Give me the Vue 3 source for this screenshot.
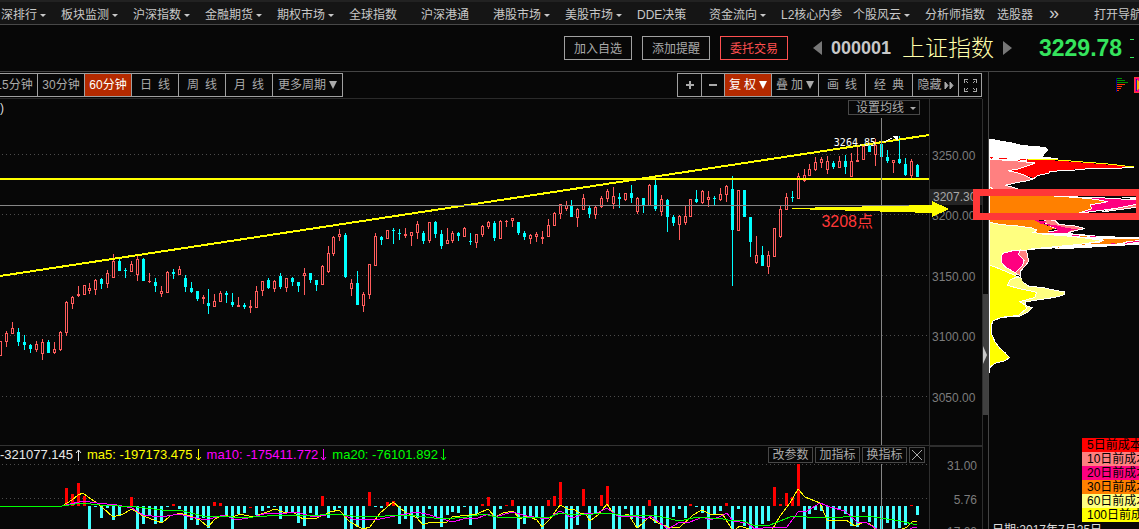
<script setup>
const menu = [
  { label: '深排行', caret: true, size: 'first' },
  { label: '板块监测', caret: true },
  { label: '沪深指数', caret: true },
  { label: '金融期货', caret: true },
  { label: '期权市场', caret: true },
  { label: '全球指数' },
  { label: '沪深港通' },
  { label: '港股市场', caret: true },
  { label: '美股市场', caret: true },
  { label: 'DDE决策' },
  { label: '资金流向', caret: true },
  { label: 'L2核心内参' },
  { label: '个股风云', caret: true },
  { label: '分析师指数' },
  { label: '选股器', size: 'short' },
  { label: '»', size: 'more' },
  { label: '打开导航' }
]
const periods = ['15分钟', '30分钟', '60分钟', '日线', '周线', '月线']
const priceLabels = [
  { text: '3250.00', y: 156 },
  { text: '3200.00', y: 216 },
  { text: '3150.00', y: 277 },
  { text: '3100.00', y: 337 },
  { text: '3050.00', y: 398 }
]
const priceTop = y => ({ top: ((y - 99) / 346) * 100 + '%' })
const volumeLabels = [
  { text: '31.00', y: 19 },
  { text: '5.76', y: 53 },
  { text: '-17.00', y: 85 }
]
const volumeTop = y => ({ top: y + 'px' })
const averages = [
  { text: '-321077.145', dir: 'up', tone: 'white' },
  { text: 'ma5: -197173.475', dir: 'down', tone: 'yellow' },
  { text: 'ma10: -175411.772', dir: 'down', tone: 'magenta' },
  { text: 'ma20: -76101.892', dir: 'down', tone: 'green' }
]
const costs = [5, 10, 20, 30, 60, 100]

// Samples are in thirds of a chart unit, relative to each batch origin:
// kind + centre, high, body top, body bottom, low.
const candleBatches = [
  { x: 0, y: 230, rows: 'r0,333,333,378,378 r19,303,309,336,351 r37,276,294,312,312 c55,294,306,336,348 c73,315,336,345,360 c91,342,345,357,369 r109,333,342,360,366 r127,327,336,372,390 c145,330,336,369,369 r163,336,357,369,372 r181,303,306,360,363 r199,213,216,309,318 r217,198,201,222,237 r235,168,192,198,201 r253,165,165,195,195 r268,159,174,183,192 r286,147,150,180,195 c304,144,147,162,177 r322,120,129,162,174 r340,72,93,144,144 c358,84,93,123,123 c376,114,120,123,144 r394,93,102,126,126 r412,78,87,135,153 c430,84,87,153,153 r448,129,153,156,159 c466,144,156,168,186 r484,168,183,192,201 r502,123,126,189,189 c520,117,126,132,147 r538,108,117,135,135 c556,135,144,171,186 c574,156,174,186,189 c592,183,183,207,213 r610,195,201,207,222 c625,177,219,228,252 r643,192,213,231,231 r661,183,189,216,216 c679,183,189,195,219 c697,189,216,225,231 r715,201,225,231,231 c733,219,225,231,237 r751,210,228,234,249 r769,168,183,234,234 r787,153,153,183,198 c805,144,150,174,177 r823,150,153,177,186 c841,129,138,171,177 r859,144,144,174,186 c877,141,144,156,168 c895,156,156,168,186' },
  { x: 300, y: 160, rows: 'r13,324,339,348,405 c31,339,339,360,369 c49,360,360,375,393 r67,315,318,375,375 r85,258,279,336,339 r100,228,231,282,288 r118,207,222,231,243 c136,219,225,351,354 r154,357,369,387,408 c172,333,369,435,435 r190,396,402,438,456 r208,312,312,405,417 r226,219,228,318,318 c244,228,231,240,255 r262,210,210,237,237 c280,204,210,213,252 c298,207,219,222,240 r316,204,222,228,234 r334,216,216,228,258 r352,183,192,219,237 c370,213,219,243,252 r388,186,186,243,249 c406,183,186,222,234 c424,210,222,258,267 r442,204,240,252,252 r457,213,219,243,249 c475,216,219,228,243 r493,201,204,231,231 c511,219,243,246,255 r529,222,222,249,264 r547,195,198,225,231 r565,183,186,201,207 c583,183,189,234,243 r601,180,183,237,237 r619,180,183,186,201 r637,174,174,183,201 c655,186,186,219,225 c673,213,219,231,240 r691,222,225,237,252 r709,216,222,231,246 r727,213,231,237,252 r745,177,195,231,231 r763,156,159,198,198 r781,132,132,162,177 r799,123,135,147,153 c814,120,138,171,171 r832,144,147,174,201 r850,102,114,150,150 c868,138,144,162,174 r886,138,141,165,177' },
  { x: 600, y: 120, rows: 'r4,228,234,261,264 r22,207,213,237,246 r40,201,228,252,267 c58,219,231,237,264 r76,219,219,240,243 c94,195,219,234,249 r112,231,234,276,282 c130,234,234,255,279 r148,192,195,258,258 c166,177,195,267,273 r184,225,237,276,288 c202,237,240,291,336 c220,285,291,309,318 r238,285,288,315,360 r256,258,288,309,315 r271,237,237,291,291 c289,210,237,246,249 r307,210,213,249,252 r325,213,231,240,261 c343,228,234,237,255 r361,204,222,240,243 r379,195,198,225,246 c397,168,207,330,498 r415,210,210,333,333 c433,210,210,291,291 c451,291,291,366,411 r469,348,405,429,432 c487,378,405,438,438 r505,393,405,441,462 r523,324,324,411,411 r541,258,267,351,354 r559,219,231,270,270 c577,213,231,234,246 r595,159,168,237,237' },
  { x: 760, y: 120, rows: 'r133,147,165,183,186 r148,132,147,168,168 r166,111,126,150,153 r184,111,117,129,144 r202,108,123,150,162 c220,123,129,141,147 r238,108,123,144,144 c256,105,123,141,162 r274,99,123,171,171 r292,75,120,126,126 r310,75,78,120,120 c328,72,78,96,96 r346,57,75,105,138 c364,66,72,111,126 c382,90,111,123,129 r400,120,120,129,159 c418,48,117,129,132 c436,114,132,165,168 r454,117,123,168,174 c472,132,135,171,171' }
]
const box = (x, y, w, h) => `M${x} ${y}h${w}v${h}h${-w}z`
let rising = ''
let hollow = ''
let falling = ''
for (const batch of candleBatches) {
  for (const row of batch.rows.split(' ')) {
    const [cx, ...ys] = row.slice(1).split(',').map(Number)
    const x = batch.x + Math.floor(cx / 3)
    const [high, top, bottom, low] = ys.map(v => batch.y + Math.round(v / 3))
    if (row[0] === 'r') {
      if (top > high) rising += box(x, high, 1, top - high)
      if (low > bottom) rising += box(x, bottom, 1, low - bottom)
      rising += box(x - 1, top, 3, bottom - top)
      if (bottom - top > 2) hollow += box(x, top + 1, 1, bottom - top - 2)
    } else {
      falling += box(x, high, 1, low - high) + box(x - 1, top, 3, bottom - top)
    }
  }
}

// Histogram samples: kind + centre, end; the zero line is at 198.
const barBatches = [
  { x: 0, rows: 'r199,144 r217,162 r235,129 r253,168 c268,267 c286,201 c304,234 c322,204 c340,240 c358,228 r394,171 c412,267 c430,252 c448,225 c466,252 c484,250 c502,201 r520,192 c538,207 c556,267 c574,240 c592,255 c610,234 c625,264 r643,186 r661,189 c679,228 c697,267 c715,222 c733,219 r751,201 c769,225 c787,213 c805,204 c823,201 c841,237 c859,216 c877,219 c895,249 c913,258 c931,219 c949,231 r967,168 c985,234 c1003,210 c1018,204 c1036,267 c1054,267 c1072,261 c1090,267 r1108,156 c1126,201' },
  { x: 380, rows: 'c4,204 r22,186 r40,183 c58,252 c76,237 c94,267 c112,234 c130,267 c148,207 c166,231 c184,261 c202,225 c217,216 c235,219 c253,201 c271,255 c289,222 r307,192 r325,171 c343,267 c361,207 r379,195 r397,180 c415,267 c433,252 c451,228 c469,231 c487,267 r505,180 r523,168 r541,126 c559,267 c574,267 c592,255 r610,147 c628,267 c646,222 r664,165 r682,138 c700,267 c718,267 c736,207 c754,237 c772,264 c790,267 r808,180 c826,249 c844,267 c862,267 c880,231 c898,207 c916,234 r931,192 c949,201 c967,219 c985,267 c1003,222 c1021,213 r1039,189 c1057,267 c1075,207' },
  { x: 740, rows: 'c13,258 c31,267 c49,267 c67,252 c85,243 r103,141 r121,192 r139,159 r157,171 r175,72 c193,267 c208,222 c226,210 c244,213 c262,267 c280,267 c298,210 c316,222 c334,258 c352,261 c370,216 c388,246 c406,267 c424,267 c442,249 c460,267 c478,264 c496,255 r514,195 c532,225' }
]
let redBars = ''
let cyanBars = ''
for (const batch of barBatches) {
  for (const row of batch.rows.split(' ')) {
    const [cx, end] = row.slice(1).split(',').map(Number)
    const x = batch.x + Math.floor(cx / 3) - 1
    const y = 440 + Math.round(end / 3)
    if (row[0] === 'r') redBars += box(x, y, 3, Math.abs(506 - y) || 1)
    else cyanBars += box(x, 506, 3, y - 506)
  }
}
const curve = parts => parts.map(([x, s]) => s.split(' ').map(p => {
  const [a, b] = p.split(',').map(Number)
  return `${Math.round(x + a / 3)},${Math.round(440 + b / 3)}`
}).join(' ')).join(' ')
const ma5 = curve([
  [0, '185,198 215,180 235,166 250,160 265,170 290,188 310,204 340,230 370,222 395,208 430,228 470,242 485,249 510,228 540,219 570,228 600,240 625,260 645,236 670,226 700,230 720,222 760,232 800,216 825,208 850,216 880,217 910,238 950,234 990,216 1018,211 1050,245 1090,266 1110,260'],
  [380, '0,220 40,186 60,205 75,215 110,235 130,255 150,246 200,247 215,230 290,222 325,208 345,230 370,218 400,214 420,236 440,228 470,240 487,262 510,236 541,196 565,208 580,206 600,218 615,220 630,244 655,225 682,192 700,220 720,230 745,222 772,264 790,250 808,232 835,250 865,262 900,262 940,224 965,210 990,222 1030,225 1058,272 1080,258'],
  [740, '50,275 95,270 120,228 150,188 175,148 195,172 240,190 262,241 318,241 345,259 372,246 390,252 410,270 480,270 500,262 515,247 532,243']
])
const ma10 = curve([
  [0, '185,197 250,182 290,188 350,196 395,205 430,224 480,230 540,221 570,232 620,240 670,226 710,241 760,230 800,218 860,218 890,217 940,230 1000,222 1030,224 1060,238 1100,241'],
  [380, '0,236 60,224 110,217 150,226 215,245 260,234 295,235 325,221 345,231 395,217 440,228 500,238 541,214 575,233 620,220 650,220 680,204 718,232 760,228 800,236 812,228 865,266 900,247 930,246 970,232 990,240 1018,232 1040,218 1060,244'],
  [740, '20,250 45,268 95,262 140,261 175,217 200,214 240,190 270,200 315,214 350,245 375,245 410,268 500,275 520,262 532,262']
])
const ma20 = curve([
  [0, '0,199 185,199 245,190 300,195 410,201 485,211 550,213 610,228 700,230 760,232 800,228 830,225 860,225 890,228 960,224 1000,222 1060,228'],
  [380, '0,230 30,226 110,229 190,236 260,231 310,223 350,230 420,230 510,230 540,220 580,225 640,222 690,220 720,226 830,228 900,243 950,232 1030,236 1060,243'],
  [740, '0,241 40,256 90,254 150,232 170,228 200,232 290,234 330,229 380,227 440,236 480,243 532,254']
])
</script>

<template>
  <div class="app">
    <nav class="menu">
      <a v-for="m in menu" :key="m.label" href="#" class="menu-item" :class="m.size">
        <span>{{ m.label }}</span><i v-if="m.caret" class="caret"></i>
      </a>
    </nav>

    <header class="quote">
      <div class="actions">
        <button class="action">加入自选</button>
        <button class="action">添加提醒</button>
        <button class="action hot">委托交易</button>
      </div>
      <button class="step" aria-label="上一个"><svg width="9" height="14"><path d="M9 0v14L0 7z" fill="#777" /></svg></button>
      <span class="code">000001</span>
      <h1 class="name">上证指数</h1>
      <button class="step" aria-label="下一个"><svg width="9" height="14"><path d="M0 0v14l9-7z" fill="#777" /></svg></button>
      <strong class="price">3229.78</strong>
      <span class="dashes"><i></i><i></i></span>
    </header>

    <div class="body">
      <main class="main">
        <div class="toolbar">
          <div class="group periods">
            <button v-for="p in periods" :key="p" class="tool" :class="{ on: p === '60分钟' }">
              <template v-if="p.length === 2"><span class="wide"><span>{{ p[0] }}</span><span>{{ p[1] }}</span></span></template>
              <template v-else>{{ p }}</template>
            </button>
            <button class="tool more-periods">更多周期<i class="tri"></i></button>
          </div>
          <div class="group">
            <button class="tool square plus" aria-label="放大"><svg width="8" height="8"><path d="M3 0h2v3h3v2H5v3H3V5H0V3h3z" fill="#aaa" /></svg></button>
            <button class="tool square" aria-label="缩小"><svg width="8" height="8"><path d="M0 3h8v2H0z" fill="#aaa" /></svg></button>
            <button class="tool on"><span class="near"><span>复</span><span>权</span></span><i class="tri"></i></button>
            <button class="tool"><span class="near"><span>叠</span><span>加</span></span><i class="tri"></i></button>
            <button class="tool"><span class="wide"><span>画</span><span>线</span></span></button>
            <button class="tool"><span class="wide"><span>经</span><span>典</span></span></button>
            <button class="tool hide">隐藏<svg width="10" height="9"><path d="M1 1l3 3.500-3 3.500zM6 1l3 3.500-3 3.500z" fill="#aaa" stroke="#aaa" /></svg></button>
            <button class="tool square" aria-label="全屏">
              <svg width="13" height="13" fill="none" stroke="#aaa" shape-rendering="crispEdges"><path d="M.5 4V.5H4M9 .5h3.500V4M.5 9v3.500H4M9 12.500h3.500V9M2 2l2 2M11 2L9 4M2 11l2-2M11 11L9 9" /></svg>
            </button>
          </div>
        </div>

        <div class="charts">
          <section class="chart price-chart">
            <svg class="plot open" viewBox="0 99 929 346" preserveAspectRatio="none" shape-rendering="crispEdges">
              <path d="M2 154.500H929M2 214.500H929M2 275.500H929M2 335.500H929M2 396.500H929" stroke="#4c4c4c" stroke-dasharray="1 3" />
              <path :d="rising" fill="#ff5c5c" />
              <path :d="hollow" fill="#070707" />
              <path :d="falling" fill="#00ffff" />
              <path d="M0 276L929 135" stroke="#ffff00" stroke-width="2" />
              <path d="M0 179H929" stroke="#ffff00" stroke-width="2" />
              <path d="M0 205.500H929M881.500 118V445" stroke="#868686" />
              <path d="M884 142l8-4M893 136h5l-1 4z" stroke="#fff" fill="#fff" />
              <path d="M792 208.500H860" stroke="#ffff00" />
              <path d="M792 208L932 205V201L949 209L932 217V213L792 209z" fill="#ffff00" />
            </svg>
            <span class="paren">)</span>
            <button class="ma-setting">设置均线<i class="caret"></i></button>
            <span class="peak">3264.85</span>
            <span class="note">3208点</span>
          </section>
          <div class="axis">
            <span class="cursor-price" :style="priceTop(197)">3207.30</span>
            <span v-for="l in priceLabels" :key="l.text" class="tick" :style="priceTop(l.y)">{{ l.text }}</span>
          </div>
          <div class="scroll"><div class="thumb"><i></i></div></div>

          <section class="chart volume-chart">
            <svg class="plot" viewBox="0 446 929 83" preserveAspectRatio="none" shape-rendering="crispEdges">
              <path d="M2 464.500H929M2 498.500H929" stroke="#4c4c4c" stroke-dasharray="1 3" />
              <path :d="redBars" fill="#ff0000" />
              <path :d="cyanBars" fill="#40ffff" />
              <g fill="none">
                <polyline :points="ma5" stroke="#ffff00" />
                <polyline :points="ma10" stroke="#ff00ff" />
                <polyline :points="ma20" stroke="#00ff00" />
              </g>
              <path d="M881.500 464V529" stroke="#868686" />
            </svg>
            <div class="readout">
              <span v-for="a in averages" :key="a.text" class="reading" :class="a.tone">
                {{ a.text }}
                <svg class="dir" width="7" height="12" fill="none" stroke="currentColor">
                  <path v-if="a.dir === 'up'" d="M3.500 12V1M1 4l2.500-3L6 4" />
                  <path v-else d="M3.500 0v11M1 8l2.500 3L6 8" />
                </svg>
              </span>
            </div>
            <div class="chips">
              <button class="chip">改参数</button>
              <button class="chip">加指标</button>
              <button class="chip">换指标</button>
              <button class="chip close" aria-label="关闭"><svg width="10" height="10"><path d="M0 0l10 10M10 0L0 10" stroke="#aaa" /></svg></button>
            </div>
          </section>
          <div class="axis low">
            <span v-for="l in volumeLabels" :key="l.text" class="tick right" :style="volumeTop(l.y)">{{ l.text }}</span>
          </div>
          <div class="scroll"></div>
        </div>
      </main>

      <aside class="side">
        <svg class="profile" viewBox="42 6 450 930" width="150" height="310" shape-rendering="crispEdges">
          <g stroke="#fff" stroke-width="3">
            <path fill="#fff" d="M42 207L80 214 110 219 140 226 180 230 212 232 218 242 205 252 203 262 250 266 42 268z" />
            <path fill="#ff0000" stroke="none" d="M42 260L60 264 155 268 250 272 350 280 476 290 450 293H360L225 305 222 310 190 318 178 324 90 300z" />
            <path fill="none" d="M50 266L155 271 155 267M476 291L440 294H360L290 301 225 304 222 310 190 316 178 324" />
            <path fill="none" stroke="#ffff00" d="M160 268L250 270 300 274 350 278 400 282 476 291" />
            <path fill="#ff8080" d="M42 268L120 272 180 279 160 287 130 297 98 302 125 308 150 316 165 324 180 324 160 332 130 337 90 346 110 351 130 357H42z" />
            <path fill="#ff8000" d="M42 350L60 360 100 372 235 378 390 388 398 396 345 405 350 415 340 422 310 430 240 440 180 450 185 458 208 462 215 470 190 480 245 486 215 490 180 487 185 478 100 470 42 458z" />
            <path fill="#ff0080" d="M280 380L390 384 483 390 560 395 483 405 440 413 310 430 350 416 345 405 398 395 360 388z" />
            <path fill="#ff8080" d="M400 420L483 403 560 398 483 412 380 426zM440 381L483 386V382z" />
            <path fill="#ff8080" d="M215 448L240 452 252 463 300 468 330 476 300 482 270 491 220 490 250 478 220 466 205 455z" />
            <path fill="#ff0080" stroke="none" d="M180 450L215 454 205 461 250 467 275 474 310 478 284 482 280 488 220 488 250 482 240 473 210 464 180 458z" />
            <path fill="#ff8000" stroke="none" d="M120 450H178L200 463 222 468 240 476 215 484 225 490H182L188 477 120 466z" />
            <path fill="#fff" d="M180 490L270 490 340 496 380 500 492 503V523L410 527 320 533 130 542z" />
            <path fill="#ff8000" stroke="none" d="M385 507L450 507 492 510 448 515 442 520 315 524 380 517z" />
            <path fill="none" stroke="#ff8000" d="M260 496h12M315 500h20M243 529l10 3M465 507h27" />
            <path fill="none" stroke="#ff0080" d="M292 496h20M345 499h18M408 521h12M450 520l42-7" />
            <path fill="#ffff80" d="M42 457L80 464 130 468 170 474 185 480 175 487 200 492 300 500 388 512 315 523 240 530 160 538 155 545 160 575 140 600 125 610 120 620 145 626 145 636 160 648 210 654 245 662 270 666 268 674 240 682 200 688 150 696 150 706 172 713 160 726 135 738 42 745z" />
            <path fill="#070707" stroke="none" d="M140 541L240 535V655L160 646 140 632 142 605 163 575 155 550z" />
            <path fill="#ff8080" d="M110 540L155 540 157 557 162 573 150 588 138 600 136 618 118 606 146 575 125 555z" />
            <path fill="#ff0080" d="M82 550L110 543 135 540 131 553 148 572 140 590 120 608 90 590 78 575z" />
            <path fill="#ffff00" d="M42 584L70 595 110 612 128 620 105 630 97 646 130 655 185 667 180 682 135 695 150 705 155 715 140 728 130 736 80 742 55 752 49 765V790L60 815 75 835 90 848 104 863 90 872 60 880 45 892 42 908z" />
            <path d="M43 207V908" />
          </g>
        </svg>
        <svg class="side-icons" width="23" height="18" shape-rendering="crispEdges">
          <path d="M0 1h1v14H0z" fill="#000090" />
          <path d="M1 1h5v1H1zM1 3h8v1H1zM1 5h11v1H1z" fill="#009000" />
          <path d="M1 7h8v1H1zM1 9h5v1H1zM1 11h4v1H1zM1 13h2v1H1z" fill="#ff3800" />
          <rect x="18" y="0" width="14" height="16" fill="#ff3838" />
          <rect x="19" y="1" width="12" height="14" fill="#ff0080" />
          <path d="M20 2h1v12h-1z" fill="#0030a0" />
          <path d="M21 3l7 5-7 5z" fill="#ffb000" />
        </svg>
        <div class="marker"></div>
        <ul class="costs">
          <li v-for="c in costs" :key="c" :class="'c' + c">{{ c }}日前成本</li>
        </ul>
        <p class="date">日期:2017年7月25日</p>
      </aside>
    </div>
  </div>
</template>

<style>
body {
  background: #070707;
}
</style>

<style scoped>
.app {
  height: 100vh;
  display: flex;
  flex-direction: column;
  overflow: hidden;
  background: #070707;
  color: #aaa;
  font: 12px/14px "Liberation Sans", "Noto Sans CJK SC", sans-serif;
}
button {
  font: inherit;
  color: inherit;
  background: none;
  border: 0;
  padding: 0;
  margin: 0;
  white-space: nowrap;
}
svg {
  display: block;
  flex: none;
}
.menu {
  flex: none;
  height: 22px;
  display: flex;
  border-top: 2px solid #222;
  border-bottom: 1px solid #484848;
  background: #151515;
  overflow: hidden;
  padding-left: 1px;
}
.menu-item {
  flex: 0 0 72px;
  display: flex;
  align-items: center;
  gap: 3px;
  padding-top: 4px;
  color: #c8c8c8;
  text-decoration: none;
  white-space: nowrap;
}
.menu-item.first {
  flex-basis: 60px;
}
.menu-item.short {
  flex-basis: 52px;
}
.menu-item.more {
  flex-basis: 45px;
  font-size: 18px;
  padding-top: 0;
}
.caret {
  border: 3px solid transparent;
  border-top-color: currentColor;
  border-bottom: 0;
}
.quote {
  flex: none;
  height: 46px;
  display: flex;
  align-items: center;
  justify-content: flex-end;
  border-bottom: 1px solid #444;
}
.actions {
  display: flex;
  gap: 10px;
  margin-right: 25px;
}
.action {
  width: 68px;
  height: 24px;
  padding-top: 2px;
  border: 1px solid #a0a0a0;
}
.action.hot {
  color: #ff5050;
  border-color: #ff5050;
}
.code {
  margin-left: 9px;
  width: 71px;
  font-size: 18px;
  font-weight: bold;
  color: #c8c8c8;
}
.name {
  margin: 0;
  width: 101px;
  font-size: 23px;
  line-height: 28px;
  font-weight: 300;
  color: #ffffaa;
  white-space: nowrap;
}
.price {
  margin-left: 27px;
  width: 91px;
  font-size: 23px;
  color: #35e45d;
}
.dashes {
  display: flex;
  flex-direction: column;
  gap: 17px;
  width: 9px;
}
.dashes i {
  width: 4px;
  height: 1px;
  background: #35e45d;
}
.body {
  flex: 1;
  min-height: 0;
  display: flex;
}
.main {
  flex: 1;
  min-width: 0;
  display: flex;
  flex-direction: column;
}
.toolbar {
  flex: none;
  height: 26px;
  display: flex;
  align-items: center;
  justify-content: space-between;
  margin-right: 7px;
  border-bottom: 1px solid #2a2a2a;
}
.group {
  display: flex;
  border-left: 1px solid #a0a0a0;
}
.periods {
  margin-left: -10px;
}
.tool {
  width: 47px;
  height: 24px;
  display: flex;
  align-items: center;
  justify-content: center;
  gap: 2px;
  border: 1px solid #a0a0a0;
  border-left: 0;
}
.tool.on {
  background: #b42a00;
  color: #fff;
}
.more-periods {
  width: 70px;
}
.square {
  width: 23px;
}
.plus {
  width: 24px;
}
.hide {
  width: 46px;
}
.wide {
  display: flex;
  gap: 6px;
}
.near {
  display: flex;
  gap: 3px;
}
.tri {
  margin-left: 1px;
  border: 4px solid transparent;
  border-top: 8px solid currentColor;
  border-bottom: 0;
}
.charts {
  flex: 1;
  min-height: 0;
  display: grid;
  grid-template-columns: minmax(0, 1fr) 54px 6px;
  grid-template-rows: minmax(0, 1fr) 84px;
}
.chart {
  position: relative;
  min-height: 0;
}
.price-chart {
  z-index: 1;
}
.volume-chart {
  border-top: 1px solid #333;
}
.plot {
  position: absolute;
  width: 100%;
  height: 100%;
}
.plot.open {
  overflow: visible;
}
.paren {
  position: absolute;
  left: 0;
  top: 2px;
  color: #ddd;
}
.ma-setting {
  position: absolute;
  right: 9px;
  top: 1px;
  width: 72px;
  height: 15px;
  display: flex;
  align-items: center;
  justify-content: center;
  gap: 6px;
  border: 1px solid #484848;
  background: #070707;
  padding: 2px 0 0 4px;
  line-height: 13px;
}
.peak {
  position: absolute;
  right: 53px;
  top: 37px;
  font: 10px/14px "DejaVu Sans Mono", monospace;
  color: #fff;
}
.note {
  position: absolute;
  right: 56px;
  top: 113px;
  font-size: 16px;
  line-height: 20px;
  color: #ff3838;
}
.axis {
  position: relative;
  box-sizing: border-box;
  border-left: 1px solid #2e2e2e;
  border-right: 1px solid #2e2e2e;
  color: #7c7c7c;
  overflow: hidden;
}
.axis.low {
  border-top: 2px solid #2e2e2e;
}
.tick,
.cursor-price {
  position: absolute;
  left: 2px;
  transform: translateY(-50%);
}
.tick.right {
  left: auto;
  right: 5px;
}
.cursor-price {
  left: 0;
  right: 0;
  padding: 1px 3px;
  background: #242424;
  color: #a8a8a8;
}
.scroll {
  position: relative;
}
.thumb {
  position: absolute;
  top: 195px;
  left: 0;
  width: 6px;
  height: 121px;
  display: flex;
  align-items: center;
  background: #404040;
}
.thumb i {
  border: 9px solid transparent;
  border-left: 4px solid #c8c8c8;
  border-right: 0;
}
.readout {
  position: relative;
  display: flex;
  gap: 5px;
  padding-top: 2px;
  font-size: 13px;
}
.reading {
  display: flex;
  align-items: center;
  gap: 2px;
  white-space: nowrap;
}
.white {
  color: #e8e8e8;
}
.yellow {
  color: #ffff00;
}
.magenta {
  color: #ff00ff;
}
.green {
  color: #00ff00;
}
.chips {
  position: absolute;
  right: 4px;
  top: 1px;
  display: flex;
  gap: 2px;
}
.chip {
  width: 45px;
  height: 16px;
  display: flex;
  align-items: center;
  justify-content: center;
  border: 1px solid #484848;
  background: #070707;
}
.chip.close {
  width: 16px;
}
.side {
  position: relative;
  flex: none;
  width: 150px;
  box-shadow: -1px 0 #444;
}
.profile {
  position: absolute;
  left: 0;
  top: 0;
}
.side-icons {
  position: absolute;
  right: 0;
  top: 5px;
}
.marker {
  position: absolute;
  left: -16px;
  right: -4px;
  top: 117px;
  height: 17px;
  border: 7px solid #ff3838;
}
.costs {
  position: absolute;
  right: 0;
  bottom: 7px;
  width: 57px;
  margin: 0;
  padding: 0;
  list-style: none;
  color: #000;
  overflow: hidden;
}
.costs li {
  padding-left: 5px;
  height: 14px;
  white-space: nowrap;
}
.c5 {
  background: #ff0000;
}
.c10 {
  background: #ff8080;
}
.c20 {
  background: #ff0080;
}
.c30 {
  background: #ff8000;
}
.c60 {
  background: #ffff80;
}
.c100 {
  background: #ffff00;
}
.date {
  position: absolute;
  left: 3px;
  bottom: -8px;
  margin: 0;
  color: #ddd;
  white-space: nowrap;
}
</style>
